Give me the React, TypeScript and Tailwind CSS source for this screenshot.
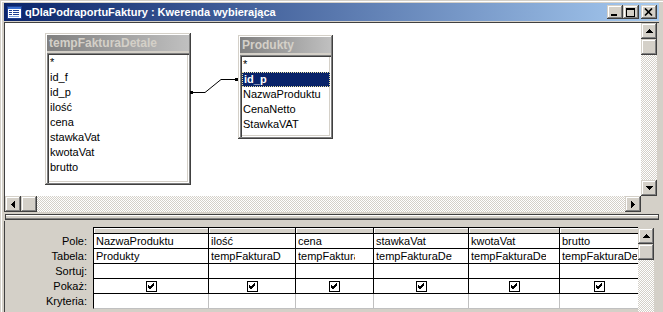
import React from 'react';

const raised =
  'shadow-[inset_-1px_-1px_#404040,inset_1px_1px_#d4d0c8,inset_-2px_-2px_#808080,inset_2px_2px_#ffffff]';
const checker =
  'bg-[image:repeating-conic-gradient(#d4d0c8_0%_25%,#ffffff_0%_50%)] bg-[length:2px_2px]';

type Dir = 'up' | 'down' | 'left' | 'right';

function Arrow({ dir }: { dir: Dir }) {
  const vertical = dir === 'up' || dir === 'down';
  const rows = [0, 1, 2, 3];
  return (
    <svg width={vertical ? 7 : 4} height={vertical ? 4 : 7} shapeRendering="crispEdges">
      {rows.map((i) => {
        if (dir === 'up') return <rect key={i} x={3 - i} y={i} width={2 * i + 1} height={1} fill="#000" />;
        if (dir === 'down') return <rect key={i} x={i} y={i} width={7 - 2 * i} height={1} fill="#000" />;
        if (dir === 'left') return <rect key={i} x={i} y={3 - i} width={1} height={2 * i + 1} fill="#000" />;
        return <rect key={i} x={i} y={i} width={1} height={7 - 2 * i} fill="#000" />;
      })}
    </svg>
  );
}

function ScrollButton({ dir }: { dir: Dir }) {
  return (
    <div className={`w-[16px] h-[16px] shrink-0 bg-[#d4d0c8] flex items-center justify-center ${raised}`}>
      <Arrow dir={dir} />
    </div>
  );
}

function Thumb() {
  return <div className={`w-[16px] h-[16px] shrink-0 bg-[#d4d0c8] ${raised}`} />;
}

function QueryIcon() {
  return (
    <svg width="16" height="16" viewBox="0 0 16 16" shapeRendering="crispEdges">
      <rect x="1" y="2" width="14" height="12" fill="#ffffff" stroke="#1c3f94" />
      <rect x="1.5" y="2.5" width="13" height="2" fill="#3b6fd0" />
      <rect x="3" y="6" width="3" height="1" fill="#1c3f94" />
      <rect x="7" y="6" width="6" height="1" fill="#1c3f94" />
      <rect x="3" y="8" width="3" height="1" fill="#1c3f94" />
      <rect x="7" y="8" width="6" height="1" fill="#1c3f94" />
      <rect x="3" y="10" width="3" height="1" fill="#1c3f94" />
      <rect x="7" y="10" width="6" height="1" fill="#1c3f94" />
      <rect x="3" y="12" width="10" height="1" fill="#7fa3e0" />
    </svg>
  );
}

function CaptionButton({ kind, className = '' }: { kind: 'min' | 'max' | 'close'; className?: string }) {
  return (
    <div className={`w-[16px] h-[14px] bg-[#d4d0c8] flex items-center justify-center ${raised} ${className}`}>
      <svg width="10" height="9" viewBox="0 0 10 9" shapeRendering="crispEdges">
        {kind === 'min' && <rect x="1" y="6" width="6" height="2" fill="#000" />}
        {kind === 'max' && (
          <>
            <rect x="0.5" y="0.5" width="8" height="8" fill="none" stroke="#000" />
            <rect x="0" y="1" width="9" height="1" fill="#000" />
          </>
        )}
        {kind === 'close' && (
          <path d="M1 0.5 L8 7.5 M8 0.5 L1 7.5" stroke="#000" strokeWidth="1.7" shapeRendering="auto" />
        )}
      </svg>
    </div>
  );
}

function TitleBar() {
  return (
    <div className="h-[18px] flex items-center bg-[linear-gradient(to_right,#0a246a,#a6caf0)] pl-[2px] pr-[2px]">
      <QueryIcon />
      <span className="ml-[3px] text-white font-bold text-[11px] leading-none whitespace-nowrap">
        qDlaPodraportuFaktury : Kwerenda wybierająca
      </span>
      <div className="ml-auto flex items-center">
        <CaptionButton kind="min" />
        <CaptionButton kind="max" />
        <CaptionButton kind="close" className="ml-[2px]" />
      </div>
    </div>
  );
}

interface TableBoxProps {
  title: string;
  fields: string[];
  selected?: string;
  className: string;
}

function TableBox({ title, fields, selected, className }: TableBoxProps) {
  return (
    <div className={`absolute bg-[#d4d0c8] p-[2px] flex flex-col ${raised} ${className}`}>
      <div className="h-[16px] shrink-0 flex items-center px-[2px] bg-[linear-gradient(to_right,#808080,#c0c0c0)]">
        <span className="font-bold text-[12px] leading-none text-[#d4d0c8] whitespace-nowrap">{title}</span>
      </div>
      <div className="mt-[2px] flex-1 bg-white pt-[2px] pl-[3px] pr-[1px] shadow-[inset_1px_1px_#808080,inset_2px_2px_#404040,inset_-1px_-1px_#ffffff,inset_-2px_-2px_#d4d0c8] overflow-hidden">
        {fields.map((f) =>
          f === selected ? (
            <div
              key={f}
              className="h-[15px] flex items-center bg-[#0a246a] text-white font-bold pl-[1px] border border-dotted border-[#e8e0a0] -ml-[1px]"
            >
              {f}
            </div>
          ) : (
            <div key={f} className="h-[15px] flex items-center whitespace-nowrap">
              {f}
            </div>
          )
        )}
      </div>
    </div>
  );
}

function Diagram() {
  return (
    <div className="relative flex-1 bg-white overflow-hidden">
      <TableBox
        title="tempFakturaDetale"
        fields={['*', 'id_f', 'id_p', 'ilość', 'cena', 'stawkaVat', 'kwotaVat', 'brutto']}
        className="left-[40px] top-[10px] w-[146px] h-[152px]"
      />
      <TableBox
        title="Produkty"
        fields={['*', 'id_p', 'NazwaProduktu', 'CenaNetto', 'StawkaVAT']}
        selected="id_p"
        className="left-[233px] top-[12px] w-[95px] h-[104px]"
      />
      {/* join line id_p -> id_p */}
      <svg className="absolute left-0 top-0" width="400" height="120">
        <polyline points="186,69.5 200,69.5 216,56.5 232,56.5" fill="none" stroke="#000" strokeWidth="1" />
        <rect x="185" y="68" width="3" height="3" fill="#000" />
        <rect x="230" y="55" width="3" height="3" fill="#000" />
      </svg>
    </div>
  );
}

function UpperPane() {
  return (
    <div className="h-[190px] shrink-0 flex pt-[1px] pl-[1px] bg-[#404040]">
      <div className="flex-1 flex bg-[#d4d0c8]">
        <div className="flex-1 flex flex-col">
          <Diagram />
          <div className="h-[16px] flex shrink-0">
            <ScrollButton dir="left" />
            <Thumb />
            <div className={`flex-1 ${checker}`} />
            <ScrollButton dir="right" />
          </div>
        </div>
        <div className="w-[16px] flex flex-col">
          <div className="flex-1 flex flex-col bg-white">
            <ScrollButton dir="up" />
            <Thumb />
            <div className={`flex-1 ${checker}`} />
            <ScrollButton dir="down" />
          </div>
          <div className="h-[16px] bg-[#d4d0c8]" />
        </div>
        <div className="w-[2px] bg-[#d4d0c8]" />
      </div>
    </div>
  );
}

function Splitter() {
  return (
    <div className="h-[9px] shrink-0 pt-[2px] pb-[1px] pl-[1px] bg-[#d4d0c8]">
      <div className="h-full border border-[#404040] bg-[#d4d0c8] shadow-[inset_0_1px_#ffffff,inset_0_-1px_#808080]" />
    </div>
  );
}

// clip: width of the visible edit area inside each column
const columns = [
  { w: 'w-[115px]', clip: 'w-[97px]', field: 'NazwaProduktu', table: 'Produkty' },
  { w: 'w-[87px]', clip: 'w-[70px]', field: 'ilość', table: 'tempFakturaDetale' },
  { w: 'w-[78px]', clip: 'w-[57px]', field: 'cena', table: 'tempFakturaDetale' },
  { w: 'w-[95px]', clip: 'w-[76px]', field: 'stawkaVat', table: 'tempFakturaDetale' },
  { w: 'w-[91px]', clip: 'w-[75px]', field: 'kwotaVat', table: 'tempFakturaDetale' },
  { w: 'w-[78px]', clip: 'w-[75px]', field: 'brutto', table: 'tempFakturaDetale' },
];

function Checkbox() {
  return (
    <svg width="11" height="11" viewBox="0 0 11 11" shapeRendering="crispEdges">
      <rect x="0.5" y="0.5" width="10" height="10" fill="#fff" stroke="#000" />
      <path d="M2 4 L4 6 L8 2 M2 5 L4 7 L8 3 M2 6 L4 8 L8 4" stroke="#000" strokeWidth="1" fill="none" />
    </svg>
  );
}

function GridRow({
  label,
  render,
  line = 'border-black',
  colLine = 'border-black',
}: {
  label: string;
  render: (i: number) => React.ReactNode;
  line?: string;
  colLine?: string;
}) {
  return (
    <div className="flex h-[15px]">
      <div className="w-[88px] shrink-0 text-right pr-[6px] leading-[15px]">{label}</div>
      <div className={`flex border-b ${line} border-l border-l-black`}>
        {columns.map((c, i) => (
          <div
            key={i}
            className={`${c.w} shrink-0 h-[14px] bg-white overflow-hidden leading-[14px] ${
              i < columns.length - 1 ? `border-r ${colLine}` : ''
            }`}
          >
            {render(i)}
          </div>
        ))}
      </div>
    </div>
  );
}

function CellText({ i, text }: { i: number; text: string }) {
  return <div className={`${columns[i].clip} ml-[2px] overflow-hidden whitespace-nowrap`}>{text}</div>;
}

function LowerPane() {
  return (
    <div className="flex-1 flex pl-[1px] bg-[#404040]">
      <div className="flex-1 flex bg-[#d4d0c8]">
        <div className="flex flex-col pt-[6px]">
          <div className="flex h-[6px]">
            <div className="w-[88px] shrink-0" />
            <div className="flex border-t border-l border-black">
              {columns.map((c, i) => (
                <div
                  key={i}
                  className={`${c.w} shrink-0 h-[5px] bg-[#d4d0c8] shadow-[inset_1px_1px_#ffffff] ${
                    i < columns.length - 1 ? 'border-r border-black' : ''
                  }`}
                />
              ))}
            </div>
          </div>
          <div className="ml-[88px] w-[545px] h-px bg-black" />
          <GridRow label="Pole:" render={(i) => <CellText i={i} text={columns[i].field} />} />
          <GridRow label="Tabela:" render={(i) => <CellText i={i} text={columns[i].table} />} />
          <GridRow label="Sortuj:" render={() => null} />
          <GridRow
            label="Pokaż:"
            render={() => (
              <div className="h-full flex items-center justify-center">
                <Checkbox />
              </div>
            )}
          />
          <GridRow label="Kryteria:" render={() => null} line="border-[#c0c0c0]" colLine="border-[#c0c0c0]" />
        </div>
        <div className="w-[16px] mt-[7px] flex flex-col">
          <ScrollButton dir="up" />
          <Thumb />
          <div className={`flex-1 ${checker}`} />
        </div>
      </div>
    </div>
  );
}

export default function App() {
  return (
    <div className="w-[663px] h-[312px] overflow-hidden bg-[#d4d0c8] font-['Liberation_Sans',Arial,sans-serif] text-[11px] text-black">
      <div className="h-[330px] flex flex-col pt-[3px] px-[4px] shadow-[inset_1px_1px_#d4d0c8,inset_2px_2px_#ffffff]">
        <TitleBar />
        <div className="h-[1px] shrink-0" />
        <UpperPane />
        <Splitter />
        <LowerPane />
      </div>
    </div>
  );
}
